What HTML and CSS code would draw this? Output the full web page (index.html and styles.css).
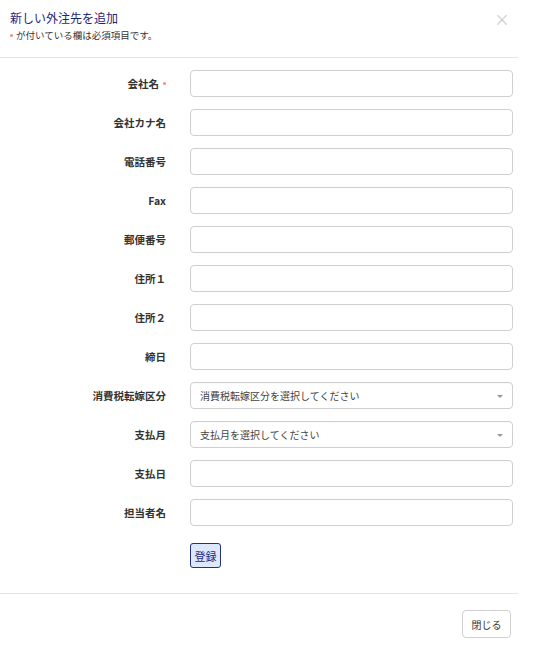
FILE: index.html
```html
<!DOCTYPE html>
<html lang="ja">
<head>
<meta charset="utf-8">
<title>新しい外注先を追加</title>
<link rel="stylesheet" href="styles.css">
</head>
<body>
<div class="modal">
  <div class="modal-header">
    <div class="modal-title">新しい外注先を追加</div>
    <div class="modal-sub"><span class="req-dot"></span>が付いている欄は必須項目です。</div>
    <span class="close">&times;</span>
  </div>
  <div class="modal-body">
    <form class="form-grid">
      <label class="lbl">会社名<span class="req-dot lbl-dot"></span></label>
      <input class="ctl" type="text">
      <label class="lbl">会社カナ名</label>
      <input class="ctl" type="text">
      <label class="lbl">電話番号</label>
      <input class="ctl" type="text">
      <label class="lbl">Fax</label>
      <input class="ctl" type="text">
      <label class="lbl">郵便番号</label>
      <input class="ctl" type="text">
      <label class="lbl">住所１</label>
      <input class="ctl" type="text">
      <label class="lbl">住所２</label>
      <input class="ctl" type="text">
      <label class="lbl">締日</label>
      <input class="ctl" type="text">
      <label class="lbl">消費税転嫁区分</label>
      <div class="ctl sel"><span>消費税転嫁区分を選択してください</span><span class="arrow"></span></div>
      <label class="lbl">支払月</label>
      <div class="ctl sel"><span>支払月を選択してください</span><span class="arrow"></span></div>
      <label class="lbl">支払日</label>
      <input class="ctl" type="text">
      <label class="lbl">担当者名</label>
      <input class="ctl" type="text">
      <span></span>
      <div class="actions"><button type="button" class="btn-primary">登録</button></div>
    </form>
  </div>
  <div class="modal-footer">
    <button type="button" class="btn-default">閉じる</button>
  </div>
</div>
</body>
</html>
```

FILE: styles.css
```css
* { box-sizing: border-box; }
html, body { margin: 0; padding: 0; background: #fff; }
body {
  font-family: "Noto Sans CJK JP", "Noto Sans", sans-serif;
  color: #333;
}
.modal {
  width: 518px;
  background: #fff;
}
.modal-header {
  position: relative;
  padding: 9px 10px 14px 10px;
  border-bottom: 1px solid #e5e5e5;
}
.modal-title {
  font-size: 12px;
  line-height: 18px;
  color: #1f2378;
}
.modal-sub {
  font-size: 9.5px;
  line-height: 16px;
  color: #333;
  display: flex;
  align-items: center;
}
.req-dot {
  display: inline-block;
  width: 3px;
  height: 3px;
  border-radius: 50%;
  background: #f08a8a;
  margin-right: 3px;
}
.lbl-dot { margin: 0 0 0 4px; }
.close {
  position: absolute;
  right: 8px;
  top: 9px;
  font-size: 19px;
  line-height: 20px;
  color: #c8c8c8;
  font-family: "DejaVu Sans", sans-serif;
  font-weight: 300;
}
.modal-body {
  padding: 12px 0 25px 0;
}
.form-grid {
  display: grid;
  grid-template-columns: 166px 323px;
  grid-template-rows: repeat(12, 27px) 30px;
  column-gap: 24px;
  row-gap: 12px;
}
.lbl {
  font-size: 10.5px;
  font-weight: bold;
  color: #333;
  display: flex;
  align-items: center;
  justify-content: flex-end;
}
.ctl {
  height: 27px;
  border: 1px solid #cfcfcf;
  border-radius: 4px;
  background: #fff;
  margin: 0;
  font-family: inherit;
}
.sel {
  display: flex;
  align-items: center;
  justify-content: space-between;
  padding: 0 9px 0 9px;
  font-size: 10px;
  color: #444;
  box-shadow: inset 0 1px 0 #fafafa;
}
.arrow {
  width: 0;
  height: 0;
  border-left: 3px solid transparent;
  border-right: 3px solid transparent;
  border-top: 3px solid #999;
  margin-top: 1px;
}
.actions {
  height: 30px;
  padding-top: 5px;
  align-self: start;
}
.btn-primary {
  display: block;
  width: 31px;
  height: 25px;
  padding: 0;
  font-family: inherit;
  font-size: 11px;
  color: #1c2a86;
  background: #dce8fd;
  border: 1px solid #27307f;
  border-radius: 3px;
}
.modal-footer {
  border-top: 1px solid #e5e5e5;
  padding: 16px 7px 0 0;
  display: flex;
  justify-content: flex-end;
}
.btn-default {
  width: 49px;
  height: 28px;
  padding: 0;
  font-family: inherit;
  font-size: 10px;
  color: #333;
  background: #fff;
  border: 1px solid #d0d0d0;
  border-radius: 4px;
}
```
